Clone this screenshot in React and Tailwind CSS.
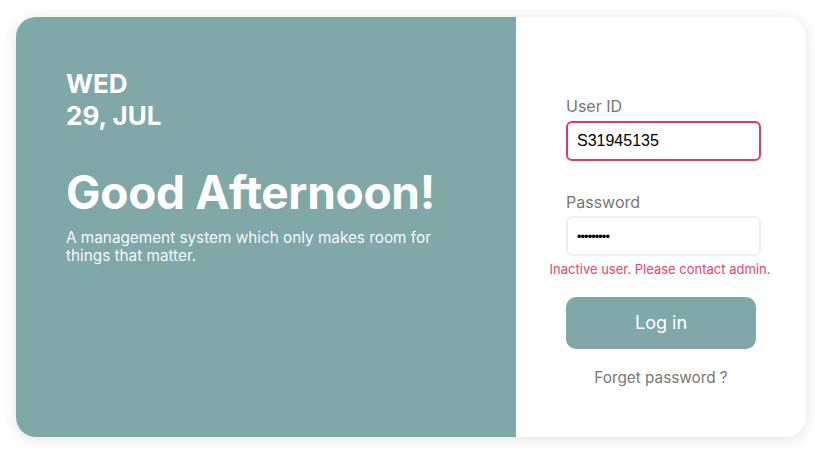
export default function App() {
  return (
    <div className="min-h-[450px] w-[815px] bg-white pl-4 pt-[17px] font-['Inter','Noto_Sans',sans-serif]">
      <div className="flex h-[420px] w-[790px] overflow-hidden rounded-[20px] bg-white shadow-[0_2px_14px_rgba(0,0,0,0.12)]">
        {/* left greeting panel */}
        <div className="w-[500px] shrink-0 bg-[#81a8a9] pl-[50px] pt-[51px] text-white">
          <div className="text-[26px] font-bold leading-[32px]">
            <div>WED</div>
            <div>29, JUL</div>
          </div>
          <h1 className="mt-[32px] text-[46px] font-bold leading-[56px] tracking-[-0.3px]">
            Good Afternoon!
          </h1>
          <p className="mt-[9px] w-[380px] text-[15.3px] leading-[18px] text-white/95">
            A management system which only makes room for things that matter.
          </p>
        </div>

        {/* right login form */}
        <div className="flex-1 pl-[50px] pt-[77px]">
          <div className="w-[195px]">
            <label className="block text-base leading-6 text-[#777777]">User ID</label>
            <input
              className="mt-[3px] h-10 w-full rounded-md border-2 border-[#e8375f] px-[9px] font-['Liberation_Sans',Arial,sans-serif] text-base text-black outline-none"
              defaultValue="S31945135"
            />
            <label className="mt-[29px] block text-base leading-6 text-[#777777]">Password</label>
            <input
              type="password"
              className="mt-[2px] h-10 w-full rounded-md border-2 border-[#eeeeee] px-[9px] font-['Liberation_Sans',Arial,sans-serif] text-[13px] tracking-[-1px] text-black outline-none"
              defaultValue="123456789"
            />
            <div className="mt-[5px] flex justify-center whitespace-nowrap pr-[7px] text-[13px] leading-4 text-[#e8456b]">
              Inactive user. Please contact admin.
            </div>
          </div>
          <div className="w-[190px]">
            <button className="mt-[20px] h-[52px] w-full rounded-[10px] bg-[#81a8a9] text-lg text-white">
              Log in
            </button>
            <div className="mt-[17px] text-center text-[15.3px] leading-6 text-[#777777]">
              Forget password ?
            </div>
          </div>
        </div>
      </div>
    </div>
  );
}
